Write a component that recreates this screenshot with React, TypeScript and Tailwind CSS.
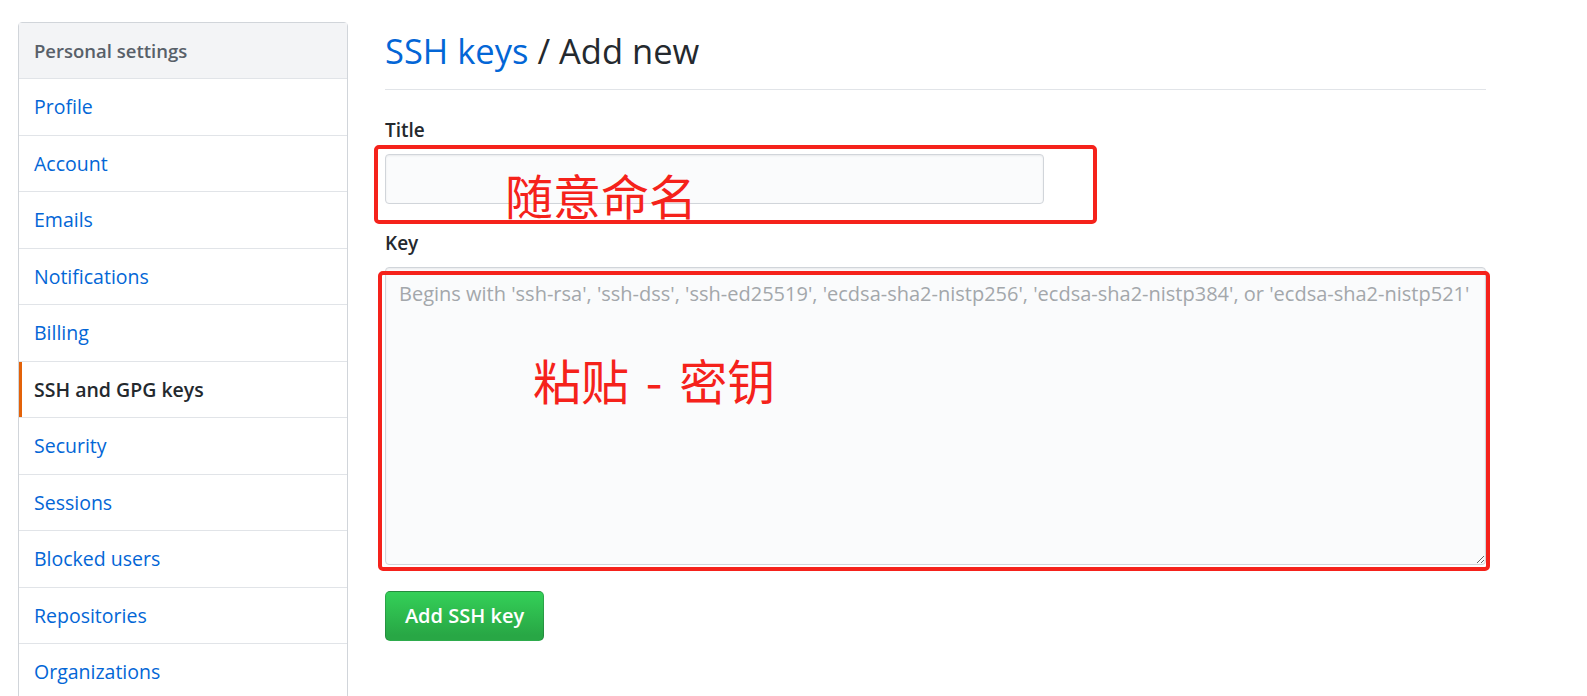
import React from 'react'

const navItems = [
  'Profile',
  'Account',
  'Emails',
  'Notifications',
  'Billing',
  'SSH and GPG keys',
  'Security',
  'Sessions',
  'Blocked users',
  'Repositories',
  'Organizations',
]

const ACTIVE = 'SSH and GPG keys'

const placeholder =
  "Begins with 'ssh-rsa', 'ssh-dss', 'ssh-ed25519', 'ecdsa-sha2-nistp256', 'ecdsa-sha2-nistp384', or 'ecdsa-sha2-nistp521'"

function Sidebar() {
  return (
    <nav className="w-[330px] shrink-0 border border-[#d1d5da] rounded-t-[4px] bg-white">
      <div className="h-[56px] flex items-center pl-[15px] bg-[#f3f4f6] border-b border-[#e1e4e8] text-[18.5px] font-semibold text-[#586069]">
        Personal settings
      </div>
      {navItems.map((item) => {
        const isActive = item === ACTIVE
        return (
          <div
            key={item}
            className={
              isActive
                ? 'relative h-[56.5px] flex items-center pl-[15px] border-b border-[#e1e4e8] text-[19.5px] font-semibold text-[#24292e]'
                : 'h-[56.5px] flex items-center pl-[15px] border-b border-[#e1e4e8] text-[19.5px] text-[#0366d6]'
            }
          >
            {isActive && <span className="absolute left-0 top-0 bottom-0 w-[3px] bg-[#e36209]" />}
            {item}
          </div>
        )
      })}
    </nav>
  )
}

export default function App() {
  return (
    <div
      className="min-h-[696px] bg-white flex gap-[37px] pl-[18px] pt-[22px] overflow-hidden"
      style={{ fontFamily: '"Open Sans", "Noto Sans CJK SC", sans-serif' }}
    >
      <Sidebar />

      <main className="w-[1101px] shrink-0">
        {/* Heading */}
        <div className="mt-[8px] pb-[17px] border-b border-[#e1e4e8]">
          <h1 className="text-[34.5px] leading-[42px] font-normal text-[#24292e]">
            <a className="text-[#0366d6]">SSH keys</a> / Add new
          </h1>
        </div>

        {/* Form */}
        <form className="pt-[27px]">
          <label className="block text-[19px] leading-[26px] font-semibold text-[#24292e]">Title</label>
          <div className="relative mt-[11px] w-[659px]">
            <input
              type="text"
              className="block w-[659px] h-[50px] rounded-[4px] border border-[#d1d5da] bg-[#fafbfc] px-3 text-[18px] outline-none shadow-[inset_0_1px_2px_rgba(27,31,35,0.075)]"
            />
            {/* annotation */}
            <div className="pointer-events-none absolute left-[-11px] top-[-9px] w-[723px] h-[79px] border-[4px] border-[#f5221b] rounded-[5px]" />
            <span
              className="pointer-events-none absolute left-[120px] top-[12px] text-[48px] leading-[56px] text-[#f5221b]"
              style={{ fontFamily: '"Noto Sans CJK SC", sans-serif' }}
            >
              随意命名
            </span>
          </div>

          <label className="block mt-[26px] text-[19px] leading-[26px] font-semibold text-[#24292e]">Key</label>
          <div className="relative mt-[11px]">
            <textarea
              placeholder={placeholder}
              className="block w-full h-[298px] resize-y rounded-[4px] border border-[#d1d5da] bg-[#fafbfc] px-[13px] py-[13px] text-[20px] leading-[26px] text-[#24292e] placeholder:text-[#a3a7ab] outline-none shadow-[inset_0_1px_2px_rgba(27,31,35,0.075)]"
            />
            {/* annotation */}
            <div className="pointer-events-none absolute left-[-7px] top-[4px] right-[-4px] bottom-[-6px] border-[4px] border-[#f5221b] rounded-[5px]" />
            <span
              className="pointer-events-none absolute left-[148px] top-[84px] text-[48px] leading-[56px] text-[#f5221b] whitespace-pre [word-spacing:6px]"
              style={{ fontFamily: '"Noto Sans CJK SC", sans-serif' }}
            >
              粘贴 - 密钥
            </span>
          </div>

          <button
            type="button"
            className="mt-[26px] h-[50px] w-[159px] rounded-[5px] border border-[rgba(27,31,35,0.2)] bg-[linear-gradient(-180deg,#34d058_0%,#28a745_90%)] text-[20px] font-semibold text-white"
          >
            Add SSH key
          </button>
        </form>
      </main>
    </div>
  )
}
